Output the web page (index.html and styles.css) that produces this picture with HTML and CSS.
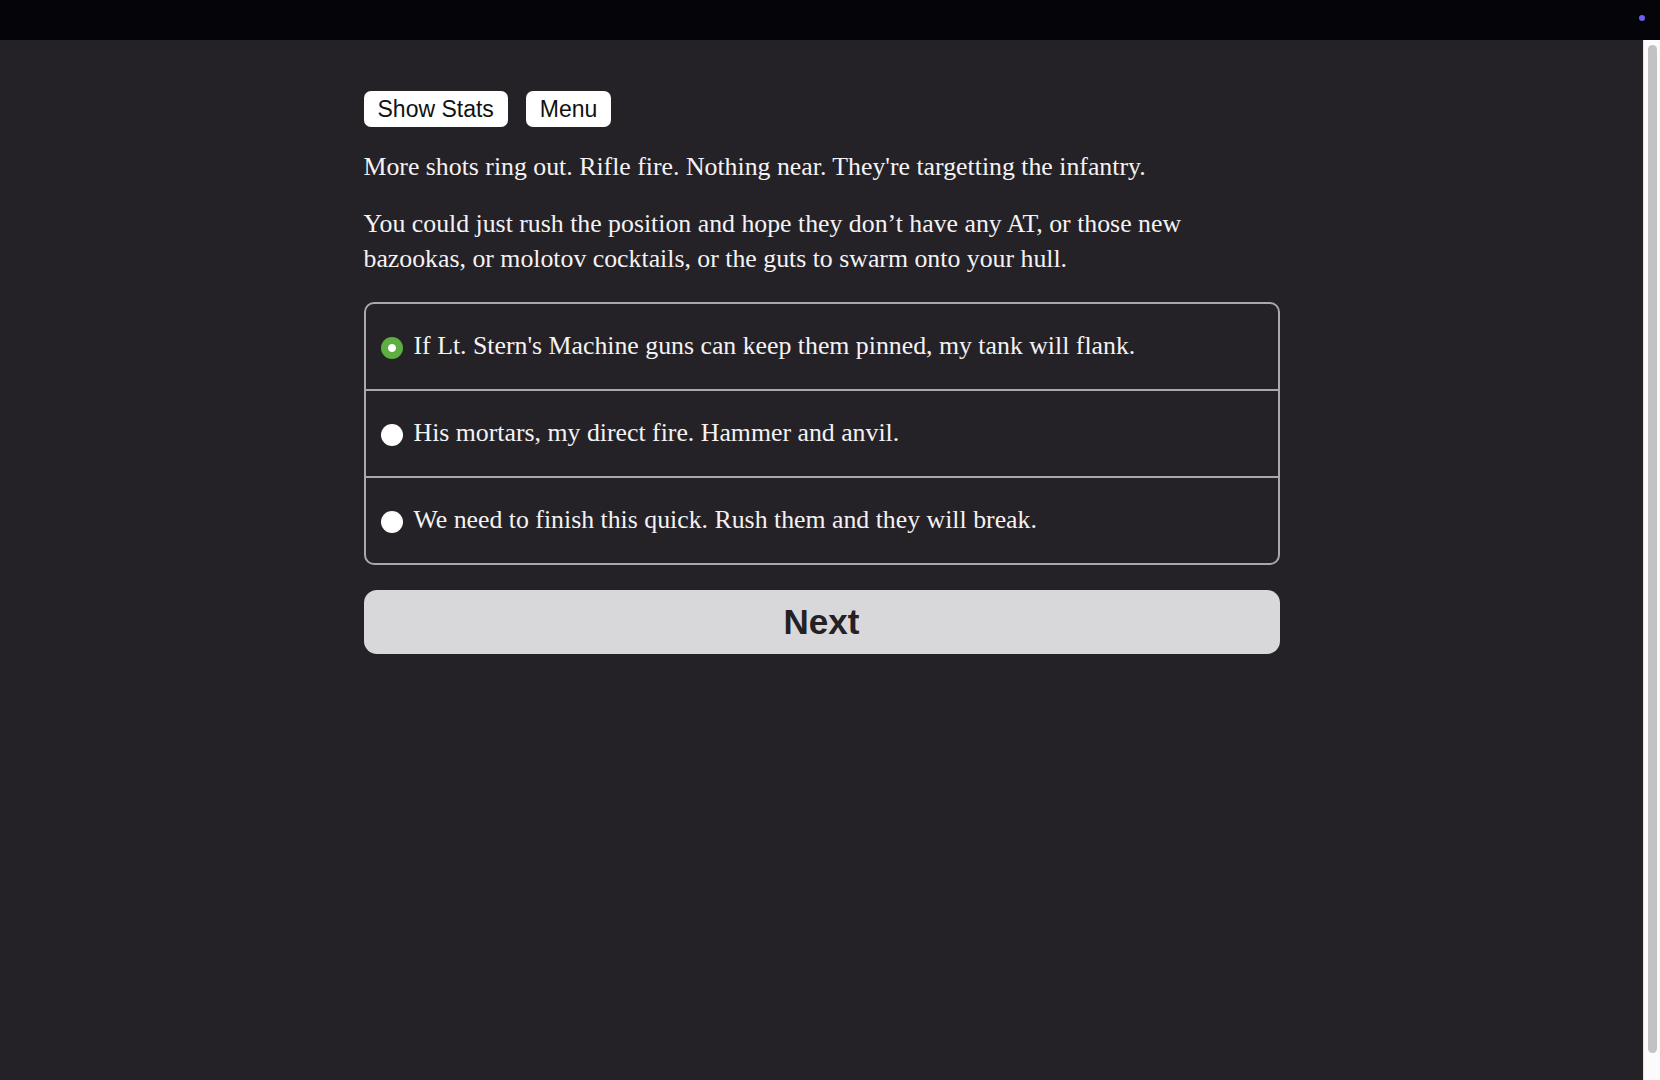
FILE: index.html
```html
<!DOCTYPE html>
<html lang="en">

<head>
    <meta charset="UTF-8">
    <meta name="viewport" content="width=device-width, initial-scale=1.0">
    <title>Chapter 3</title>
    <link rel="stylesheet" href="styles.css">
</head>

<body>
    <header class="topbar">
        <span class="status-dot"></span>
    </header>

    <div class="shell">
        <main class="game">
            <div class="container">
                <div class="toolbar">
                    <button class="tool-btn" type="button">Show Stats</button>
                    <button class="tool-btn" type="button">Menu</button>
                </div>

                <p class="story">More shots ring out. Rifle fire. Nothing near. They're targetting the infantry.</p>
                <p class="story">You could just rush the position and hope they don’t have any AT, or those new bazookas, or molotov cocktails, or the guts to swarm onto your hull.</p>

                <form id="choiceForm">
                    <div class="choices">
                        <label class="choice">
                            <input type="radio" name="choice" value="0" checked>
                            <span>If Lt. Stern's Machine guns can keep them pinned, my tank will flank.</span>
                        </label>
                        <label class="choice">
                            <input type="radio" name="choice" value="1">
                            <span>His mortars, my direct fire. Hammer and anvil.</span>
                        </label>
                        <label class="choice">
                            <input type="radio" name="choice" value="2">
                            <span>We need to finish this quick. Rush them and they will break.</span>
                        </label>
                    </div>
                    <button class="next-btn" type="submit">Next</button>
                </form>
            </div>
        </main>

        <!-- fake scrollbar rail -->
        <div class="rail">
            <div class="rail-thumb"></div>
        </div>
    </div>

    <script>
        document.getElementById('choiceForm').addEventListener('submit', function(event) {
            event.preventDefault();
        });
    </script>
</body>

</html>
```

FILE: styles.css
```css
body {
    margin: 0;
    height: 100vh;
    display: flex;
    flex-direction: column;
    background-color: #242226;
    overflow: hidden;
}

.topbar {
    height: 40px;
    flex-shrink: 0;
    background-color: #050409;
    display: flex;
    justify-content: flex-end;
    align-items: flex-start;
    padding: 15px 15px 0 0;
    box-sizing: border-box;
}

.status-dot {
    width: 6px;
    height: 6px;
    border-radius: 50%;
    background-color: #6b5ff0;
}

.shell {
    flex: 1;
    display: flex;
    min-height: 0;
}

.game {
    flex: 1;
    padding-top: 51px;
}

.container {
    width: 916px;
    margin: 0 auto;
}

.toolbar {
    display: flex;
    gap: 18px;
}

.tool-btn {
    font-family: "Liberation Sans", Arial, sans-serif;
    font-size: 23px;
    line-height: 24px;
    padding: 6px 14px;
    background: #fff;
    color: #111;
    border: none;
    border-radius: 7px;
    cursor: pointer;
}

.story {
    font-family: "Palatino Linotype", Palatino, "Liberation Serif", serif;
    font-size: 25.8px;
    line-height: 35px;
    color: #f4f2f4;
    margin: 22px 0 0;
}

.choices {
    margin-top: 26px;
    border: 2px solid #a9a8ab;
    border-radius: 10px;
}

.choice {
    display: flex;
    align-items: center;
    gap: 11px;
    padding: 24px 15px 26px;
    font-family: "Palatino Linotype", Palatino, "Liberation Serif", serif;
    font-size: 25.8px;
    line-height: 35px;
    color: #f4f2f4;
    cursor: pointer;
}

.choice + .choice {
    border-top: 2px solid #a9a8ab;
}

.choice input {
    appearance: none;
    -webkit-appearance: none;
    flex-shrink: 0;
    width: 22px;
    height: 22px;
    margin: 4px 0 0;
    border-radius: 50%;
    background: #fff;
}

.choice input:checked {
    background: radial-gradient(circle, #fff 0 3.5px, #5bae3f 4.5px);
}

.next-btn {
    display: block;
    width: 100%;
    height: 64px;
    margin-top: 25px;
    background-color: #d8d7da;
    color: #232124;
    border: none;
    border-radius: 13px;
    font-family: "Liberation Sans", Arial, sans-serif;
    font-weight: bold;
    font-size: 35px;
    cursor: pointer;
}

.rail {
    width: 17px;
    flex-shrink: 0;
    background-color: #fbfbfb;
    border-left: 1px solid #e4e4e6;
    box-sizing: border-box;
    padding: 5px 3px 27px 4px;
    display: flex;
}

.rail-thumb {
    flex: 1;
    border-radius: 5px;
    background-color: #c2c1c4;
}
```
